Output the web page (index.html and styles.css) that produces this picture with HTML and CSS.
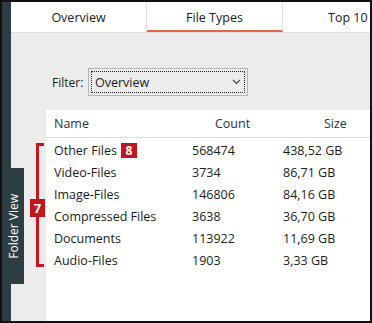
FILE: index.html
```html
<!DOCTYPE html>
<html lang="en">

<head>
    <meta charset="UTF-8">
    <meta name="viewport" content="width=device-width, initial-scale=1.0">
    <title>File Types</title>
    <link rel="stylesheet" href="styles.css">
</head>

<body>
    <div id="frame">
        <div class="rail"></div>
        <div class="main">
            <div class="tabs">
                <div class="tab">Overview</div>
                <div class="tab active">File Types</div>
                <div class="tab">Top 10</div>
            </div>
            <div class="body">
                <div class="side">
                    <div class="folder-tab"><span>Folder View</span></div>
                </div>
                <div class="content">
                    <div class="filter-row">
                        <label for="filter">Filter:</label>
                        <div class="select">
                            <span>Overview</span>
                            <svg width="9" height="6" viewBox="0 0 9 6"><path d="M1 1 L4.5 4.5 L8 1" fill="none" stroke="#444" stroke-width="1.2"/></svg>
                        </div>
                    </div>
                    <div class="panel">
                        <div class="row head">
                            <div class="c-name">Name</div>
                            <div class="c-count">Count</div>
                            <div class="c-size">Size</div>
                        </div>
                        <div class="rows">
                            <div class="row">
                                <div class="c-name">Other Files <span class="badge">8</span></div>
                                <div class="c-count">568474</div>
                                <div class="c-size">438,52 GB</div>
                            </div>
                            <div class="row">
                                <div class="c-name">Video-Files</div>
                                <div class="c-count">3734</div>
                                <div class="c-size">86,71 GB</div>
                            </div>
                            <div class="row">
                                <div class="c-name">Image-Files</div>
                                <div class="c-count">146806</div>
                                <div class="c-size">84,16 GB</div>
                            </div>
                            <div class="row">
                                <div class="c-name">Compressed Files</div>
                                <div class="c-count">3638</div>
                                <div class="c-size">36,70 GB</div>
                            </div>
                            <div class="row">
                                <div class="c-name">Documents</div>
                                <div class="c-count">113922</div>
                                <div class="c-size">11,69 GB</div>
                            </div>
                            <div class="row">
                                <div class="c-name">Audio-Files</div>
                                <div class="c-count">1903</div>
                                <div class="c-size">3,33 GB</div>
                            </div>
                            <div class="bracket"></div>
                            <span class="badge badge-7">7</span>
                        </div>
                    </div>
                </div>
            </div>
        </div>
    </div>
</body>

</html>
```

FILE: styles.css
```css
html, body {
    margin: 0;
    padding: 0;
}

body {
    font-family: "Open Sans", "Noto Sans", sans-serif;
    font-size: 12.5px;
    color: #1c1c1c;
}

#frame {
    width: 372px;
    height: 323px;
    box-sizing: border-box;
    border: 2px solid #111;
    display: flex;
    overflow: hidden;
    background-color: #ececec;
}

.rail {
    width: 9px;
    background-color: #2c3d43;
    flex-shrink: 0;
}

.main {
    flex: 1;
    display: flex;
    flex-direction: column;
    min-width: 0;
}

.tabs {
    display: flex;
    height: 30px;
    background-color: #fff;
    border-bottom: 1px solid #dedede;
    flex-shrink: 0;
}

.tab {
    width: 136px;
    flex-shrink: 0;
    display: flex;
    align-items: center;
    justify-content: center;
    font-size: 12.5px;
    border-right: 1px solid #e2e2e2;
    box-sizing: border-box;
}

.tab.active {
    border-bottom: 2px solid #e2674a;
    padding-top: 2px;
}

.tab:last-child {
    border-right: none;
    justify-content: flex-start;
    padding-left: 45px;
}

.body {
    flex: 1;
    display: flex;
}

.side {
    width: 35px;
    flex-shrink: 0;
}

.folder-tab {
    margin-top: 135px;
    margin-left: -9px;
    width: 22px;
    height: 116px;
    background-color: #2c3d43;
    display: flex;
    align-items: center;
    justify-content: center;
}

.folder-tab span {
    writing-mode: vertical-rl;
    transform: rotate(180deg);
    color: #fff;
    font-size: 12px;
    white-space: nowrap;
}

.content {
    flex: 1;
    display: flex;
    flex-direction: column;
    min-width: 0;
}

.filter-row {
    display: flex;
    align-items: center;
    height: 28px;
    margin-top: 35px;
    margin-bottom: 14px;
}

.filter-row label {
    margin-left: 6px;
    width: 36px;
    font-size: 12px;
}

.select {
    width: 160px;
    height: 28px;
    box-sizing: border-box;
    border: 1px solid #b4b4b4;
    background-color: #ececec;
    position: relative;
    display: flex;
    align-items: center;
    justify-content: space-between;
    padding: 0 6px 0 6px;
    font-size: 12.5px;
}

.select::before {
    content: "";
    position: absolute;
    top: 2px;
    left: 2px;
    right: 2px;
    bottom: 2px;
    border: 1px dotted #222;
}

.panel {
    flex: 1;
    background-color: #fff;
}

.row {
    display: grid;
    grid-template-columns: 140px 97px 1fr;
    height: 22px;
    align-items: center;
    white-space: nowrap;
}

.row.head {
    height: 27px;
    border-bottom: 1px solid #e6dfd8;
    color: #2a3540;
}

.head .c-count {
    text-align: center;
    padding-right: 10px;
}

.head .c-size {
    padding-left: 41px;
}

.c-name {
    padding-left: 8px;
    display: flex;
    align-items: center;
}

.c-count {
    padding-left: 6px;
}

.rows {
    position: relative;
    padding-top: 1px;
}

.badge {
    display: inline-flex;
    align-items: center;
    justify-content: center;
    width: 16px;
    height: 15px;
    margin-left: 4px;
    background-color: #c4161c;
    color: #fff;
    font-weight: bold;
    font-size: 12px;
}

.badge-7 {
    position: absolute;
    left: -16px;
    top: 61px;
    width: 15px;
    height: 18px;
    margin: 0;
    font-size: 13px;
}

.bracket {
    position: absolute;
    left: -10px;
    top: 5px;
    width: 5px;
    height: 118px;
    border: 3px solid #c4161c;
    border-right: none;
}
```
